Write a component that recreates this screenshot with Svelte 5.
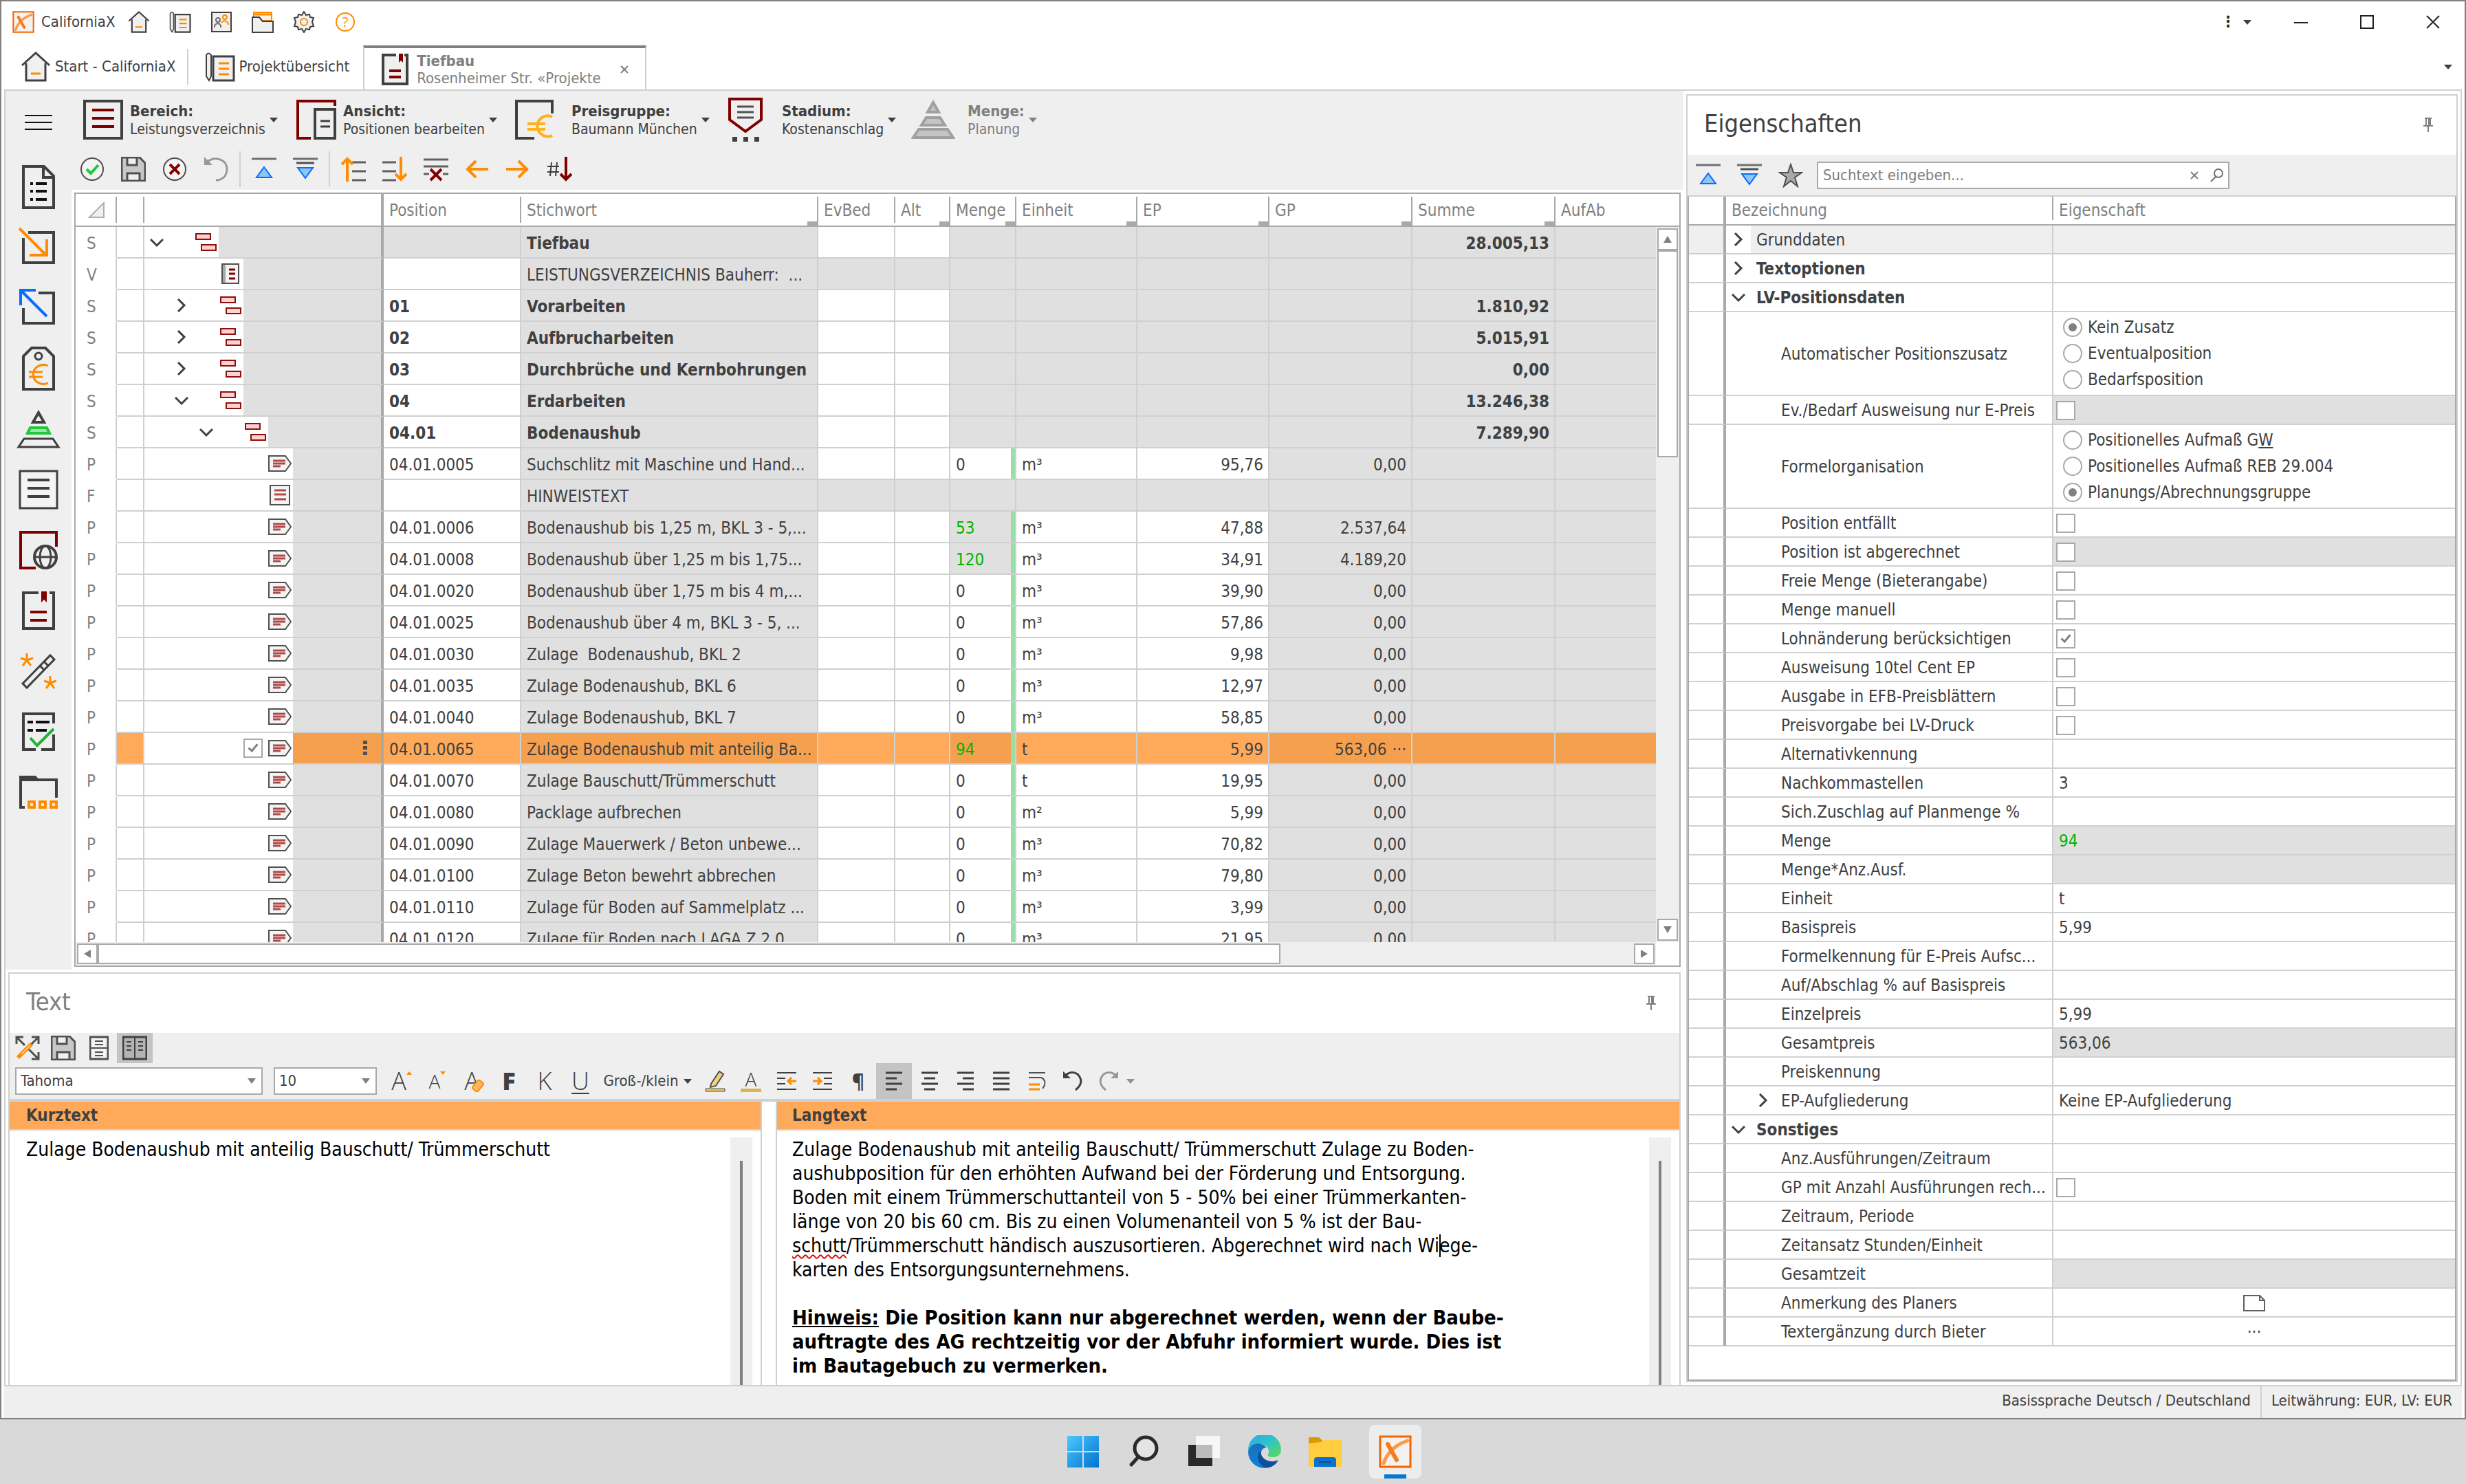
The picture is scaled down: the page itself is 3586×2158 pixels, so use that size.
<script>
  const DARK = "#404040";
  const RED = "#800000";
  const ORANGE = "#ff8c00";
  const BLUE = "#0a6cff";

  const line = (d, color = DARK, w = 3, extra = "") =>
    `<path d="${d}" fill="none" stroke="${color}" stroke-width="${w}" ${extra}/>`;
  const shape = (d, fill, color = DARK, w = 2) =>
    `<path d="${d}" fill="${fill}" stroke="${color}" stroke-width="${w}"/>`;

  const xLogo =
    shape("M2 2H46V46H2Z", "#f4f1ee", "#f26500", 3) +
    line("M42 8C24 14 12 26 7 41", "#fb9a4d", 5, 'stroke-linecap="round"') +
    line("M13 13L18 22L26 36", "#f47b20", 6, 'stroke-linecap="round"');

  const home =
    shape("M8 18V42H36V18L22 4Z", "#f0f0f0", "none", 0) +
    line("M2 20L22 2L42 20") +
    line("M8 17V42H36V17") +
    line("M15 32H29", ORANGE);

  const plan =
    shape("M12 7H42V42H12Z", "#f0f0f0", DARK, 3) +
    shape("M2 36V5Q5 0 9 5V36L6 42Z", "#f0f0f0", DARK, 2) +
    line("M20 17H35M20 25H35M20 33H35", ORANGE);

  const collapse =
    line("M0 3H36", "#707070") + shape("M18 15L29 30H7Z", "#8ec7f2", BLUE);
  const expand =
    line("M0 3H36", "#707070") +
    line("M5 9H31", "#505050") +
    shape("M18 31L29 16H7Z", "#8ec7f2", BLUE);

  const save =
    shape("M1 1H27L35 9V35H1Z", "#c8c8c8", "#505050", 3) +
    shape("M9 1H23V12H9Z", "#f0f0f0", "#505050", 3) +
    shape("M9 24H27V35H9Z", "#f0f0f0", "#505050", 3);

  // name: [width, height, body]
  const icons = {
    logo: [48, 48, xLogo],
    home: [44, 44, home],
    plan: [44, 44, plan],
    contacts: [
      32,
      32,
      shape("M2 2H30V30H2Z", "#f0f0f0") +
        '<circle cx="11" cy="13" r="3" fill="none" stroke="#707070" stroke-width="2"/>' +
        line("M6 24V21Q11 15 15 21V24", "#707070", 2) +
        '<circle cx="21" cy="9" r="3" fill="none" stroke="#ff8c00" stroke-width="2"/>' +
        line("M16 17Q21 11 26 18V20", ORANGE, 2),
    ],
    folders: [
      32,
      32,
      shape("M3 2H29V14H3Z", "#fff3e0", ORANGE) +
        line("M3 5H29", ORANGE) +
        shape("M1 9H11L16 15H31V31H1Z", "#f0f0f0"),
    ],
    gear: [
      32,
      32,
      shape(
        "M16 1L19 6L24 5L25 9L30 10L28 16L30 22L25 23L24 27L19 26L16 31L13 26L8 27L7 23L2 22L4 16L2 10L7 9L8 5L13 6Z",
        "#f0f0f0",
      ) +
        '<circle cx="16" cy="16" r="5" fill="none" stroke="#ff8c00" stroke-width="2"/>',
    ],
    help: [
      32,
      32,
      '<circle cx="16" cy="16" r="13" fill="none" stroke="#ff8c00" stroke-width="2"/>' +
        '<text x="16" y="23" font-size="20" text-anchor="middle" fill="#ff8c00" font-family="Open Sans, sans-serif">?</text>',
    ],
    book: [
      44,
      48,
      shape("M5 3H40V45H5Z", "#f0f0f0", "none", 0) +
        line("M24 3H5V45H40V3H36", DARK, 4) +
        shape("M28 1H34V14L31 11L28 14Z", RED, "none", 0) +
        line("M14 26H31M14 35H31", RED, 4),
    ],
    menu: [40, 24, line("M0 2H40M0 12H40M0 22H40", "#101010", 2)],
    range: [
      58,
      58,
      line("M2 2H56V56H2Z", DARK, 4) +
        line("M13 15H45M13 27H45M13 39H45", RED, 4),
    ],
    view: [
      58,
      58,
      line("M56 9V2H2V56H21", RED, 4) +
        line("M27 14H56V56H27Z", DARK, 4) +
        line("M35 31H49M35 39H49", DARK, 3),
    ],
    price: [
      58,
      58,
      line("M54 20V2H2V56H28", DARK, 4) +
        line("M54 25A15 15 0 1 0 54 52M18 35H44M18 43H44", "#ffb01a", 4),
    ],
    stage: [
      58,
      66,
      shape("M6 3H52V33L29 50L6 33Z", "#f0f0f0", RED, 4) +
        line("M17 14H41M17 22H41M17 30H41", "#505050", 3) +
        shape("M10 58H17V65H10ZM26 58H33V65H26ZM42 58H49V65H42Z", DARK, "none", 0),
    ],
    quantity: [
      64,
      58,
      shape("M32 4L40 18H24Z", "#c4c4c4", "#a0a0a0", 4) +
        shape("M22 26H42L49 37H15Z", "#c4c4c4", "#a0a0a0", 4) +
        shape("M11 43H53L61 55H3Z", "#c4c4c4", "#a0a0a0", 4),
    ],
    ok: [
      36,
      36,
      '<circle cx="18" cy="18" r="16" fill="#f4f4f4" stroke="#505050" stroke-width="2"/>' +
        line("M10 18L16 24L27 12", "#1fc93a", 4),
    ],
    save: [36, 36, save],
    cancel: [
      36,
      36,
      '<circle cx="18" cy="18" r="16" fill="#f4f4f4" stroke="#505050" stroke-width="2"/>' +
        line("M11 11L25 25M25 11L11 25", RED, 4),
    ],
    undoGrey: [
      36,
      36,
      line("M6 7C16 -1 34 3 34 18C34 28 27 34 18 34", "#989898", 3) +
        shape("M1 0L13 12H1Z", "#989898", "none", 0),
    ],
    collapse: [36, 36, collapse],
    expand: [36, 36, expand],
    moveUp: [
      36,
      36,
      line("M16 8H36M16 21H36M16 34H36", "#606060") +
        line("M9 36V3M1 11L9 3L17 11", ORANGE, 4),
    ],
    moveDown: [
      36,
      36,
      line("M0 8H20M0 21H20M0 34H20", "#606060") +
        line("M27 0V33M19 25L27 33L35 25", ORANGE, 4),
    ],
    removeRows: [
      36,
      36,
      line("M0 4H36M0 14H36M0 25H8M28 25H36", "#606060") +
        line("M10 18L26 34M26 18L10 34", RED, 4),
    ],
    left: [36, 36, line("M34 18H4M16 6L4 18L16 30", ORANGE, 4)],
    right: [36, 36, line("M0 18H30M18 6L30 18L18 30", ORANGE, 4)],
    sort: [
      36,
      36,
      line("M0 14H17M0 22H17M6 8L4 28M14 8L12 28", DARK, 2) +
        line("M27 0V33M19 25L27 33L35 25", RED, 4),
    ],
    docList: [
      64,
      64,
      line("M10 2H40L54 16V62H10ZM39 2V18H54", DARK, 4) +
        line("M20 27H24M28 27H44M20 38H24M28 38H44M20 50H24M28 50H44", "#101010", 4),
    ],
    importBox: [
      64,
      64,
      line("M17 10H54V54H10V18", DARK, 4) +
        line("M4 4L43 43M44 20V43H19", ORANGE, 4),
    ],
    exportBox: [
      64,
      64,
      line("M32 10H54V54H10V32", DARK, 4) +
        line("M6 6L44 44M6 28V6H28", BLUE, 4),
    ],
    tag: [
      64,
      64,
      line("M10 62V14L22 2H42L54 14V62Z", DARK, 4) +
        '<circle cx="32" cy="14" r="5" fill="none" stroke="#404040" stroke-width="3"/>' +
        line("M46 28A15 14 0 1 0 46 53M18 37H38M18 44H38", ORANGE, 3),
    ],
    pyramid: [
      64,
      64,
      line("M32 8L40 22H24Z", DARK, 4) +
        shape("M20 30H44L48 38H16Z", "#a5e0b0", "#1fc93a", 4) +
        line("M11 46H53L61 58H3Z", DARK, 3),
    ],
    textBox: [
      64,
      64,
      shape("M5 5H59V59H5Z", "#f4f4f4", DARK, 3) +
        line("M16 18H48M16 30H48M16 42H48", DARK, 4),
    ],
    globeDoc: [
      64,
      64,
      line("M58 27V6H6V58H28", RED, 4) +
        '<circle cx="42" cy="42" r="16" fill="#f0f0f0" stroke="#404040" stroke-width="4"/>' +
        '<ellipse cx="42" cy="42" rx="8" ry="16" fill="none" stroke="#404040" stroke-width="3"/>' +
        line("M26 42H58"),
    ],
    bookmark: [
      64,
      64,
      line("M32 6H10V58H54V6H48", DARK, 4) +
        shape("M36 4H44V20L40 16L36 20Z", RED, "none", 0) +
        line("M20 34H44M20 46H44", RED, 4),
    ],
    wand: [
      64,
      64,
      line("M9 50L49 9L55 15L15 56ZM34 24L40 30M40 18L46 24", DARK, 3) +
        line("M15 6V16M15 16L6 13M15 16L24 13M15 16L9 24M15 16L21 24", ORANGE, 3) +
        line("M49 39V49M49 49L40 46M49 49L58 46M49 49L43 57M49 49L55 57", ORANGE, 3),
    ],
    checklist: [
      64,
      64,
      line("M54 20V6H10V58H28M36 58H54V36", DARK, 4) +
        line("M16 18H24M28 18H48M16 30H24M28 30H44", "#101010", 4) +
        line("M20 41L30 52L54 28", "#1fb335", 4),
    ],
    folderSquares: [
      64,
      64,
      shape("M4 8H28L33 14H4Z", DARK, "none", 0) +
        line("M58 40V14H6V54H12", DARK, 4) +
        line("M18 46H26V54H18ZM34 46H42V54H34ZM50 46H58V54H50Z", ORANGE, 4),
    ],
    group: [
      32,
      28,
      shape("M2 2H23V10H2ZM10 18H31V26H10Z", "#ffd0d0", "#8c1010"),
    ],
    foreword: [
      28,
      32,
      shape("M2 2H26V30H2Z", "#f4f4f4", "#505050") +
        shape("M3 3H7V29H3Z", "#a8a8a8", "none", 0) +
        line("M12 10H21M12 16H21M12 23H21", RED),
    ],
    item: [
      34,
      26,
      shape("M1 2H25L33 13L25 24H1Z", "#f4f4f4", "#505050") +
        line("M7 9H25M7 13H25M7 17H18", "#b04a4a", 3),
    ],
    note: [
      32,
      32,
      shape("M2 2H30V30H2Z", "#f4f4f4", "#505050") +
        line("M8 9H25M8 15H25M8 22H25", "#b04a4a", 3),
    ],
    down: [20, 20, line("M1 6L10 15L19 6", DARK, 3)],
    next: [20, 20, line("M5 1L14 10L5 19", DARK, 3)],
    pin: [14, 28, line("M2 6H12M4 6V16M10 6V16M0 17H14M7 17V26M8 6V16", "#808080", 2)],
    fullscreen: [
      36,
      36,
      line("M2 12V2H12M24 2H34V12M34 24V34H24M3 3L14 14M33 3L22 14M33 33L20 20", "#505050", 3) +
        line("M4 32L24 12", ORANGE, 6) +
        line("M9 27L22 14", "#ffc680", 2),
    ],
    splitRows: [
      28,
      36,
      shape("M1 2H27V34H1Z", "#f4f4f4", "#505050", 3) +
        line("M1 18H27M8 8H20M8 13H20M8 24H20M8 29H20", "#505050", 2),
    ],
    splitCols: [
      36,
      36,
      shape("M1 2H35V34H1Z", "#b4b4b4", "#404040", 3) +
        line("M18 2V34M6 9H13M6 15H13M6 21H13M23 9H30M23 15H30M23 21H30", "#404040", 2),
    ],
    marker: [
      32,
      32,
      shape("M10 20L22 2L28 6L17 23L9 25Z", "#f3d37a", "#505050") +
        shape("M2 27H30V31H2Z", "#e8c468", "#505050", 1),
    ],
    outdent: [
      32,
      32,
      line("M2 4H30M2 12H14M2 20H14M2 28H30", "#404040", 2) +
        line("M30 16H18M23 11L18 16L23 21", ORANGE, 3),
    ],
    indent: [
      32,
      32,
      line("M2 4H30M18 12H30M18 20H30M2 28H30", "#404040", 2) +
        line("M2 16H14M9 11L14 16L9 21", ORANGE, 3),
    ],
    alignLeft: [32, 32, line("M4 4H28M4 12H20M4 20H28M4 28H20")],
    alignCenter: [32, 32, line("M4 4H28M8 12H24M4 20H28M8 28H24")],
    alignRight: [32, 32, line("M4 4H28M12 12H28M4 20H28M12 28H28")],
    alignFull: [32, 32, line("M4 4H28M4 12H28M4 20H28M4 28H28")],
    wrap: [
      32,
      32,
      line("M4 4H28M4 11H22Q29 14 27 22L24 27", "#505050", 2) +
        line("M4 21H20M4 28H20", ORANGE, 3),
    ],
    undo: [
      32,
      32,
      line("M5 8Q14 0 23 6Q34 18 20 29", DARK, 3) +
        shape("M2 2L13 12H2Z", DARK, "none", 0),
    ],
    redo: [
      32,
      32,
      line("M27 8Q18 0 9 6Q-2 18 12 29", "#989898", 3) +
        shape("M30 2L19 12H30Z", "#989898", "none", 0),
    ],
    star: [
      36,
      36,
      shape("M18 2L22 14H34L24 21L28 34L18 26L8 34L12 21L2 14H14Z", "#a8a8a8", "#505050"),
    ],
    clear: [16, 16, line("M3 3L13 13M13 3L3 13", "#808080", 2)],
    search: [
      22,
      22,
      '<circle cx="13" cy="8" r="6" fill="none" stroke="#707070" stroke-width="2"/>' +
        line("M9 13L2 20", "#707070", 2),
    ],
    emptyNote: [32, 26, line("M1 2H24L31 9V24H1ZM24 2V9H31", "#606060", 2)],
    minimize: [24, 24, line("M2 13H22", "#202020", 2)],
    maximize: [24, 24, line("M3 3H21V21H3Z", "#202020", 2)],
    close: [24, 24, line("M3 3L21 21M21 3L3 21", "#202020", 2)],
    windows: [
      48,
      48,
      '<defs><linearGradient id="win" x1="0" y1="0" x2="1" y2="1"><stop offset="0" stop-color="#4cc8ff"/><stop offset="1" stop-color="#0073d1"/></linearGradient></defs>' +
        '<path d="M1 1H23V23H1ZM25 1H47V23H25ZM1 25H23V47H1ZM25 25H47V47H25Z" fill="url(#win)"/>',
    ],
    taskSearch: [
      48,
      48,
      '<circle cx="27" cy="19" r="16" fill="#e4e4e4" stroke="#2b2b2b" stroke-width="5"/>' +
        line("M16 32L6 43", "#2b2b2b", 5, 'stroke-linecap="round"'),
    ],
    taskView: [
      48,
      48,
      shape("M1 14H36V45H1Z", "#2a2a2a", "none", 0) +
        shape("M12 1H47V33H12Z", "#f7f7f7", "none", 0) +
        shape("M12 14H36V33H12Z", "#bcbcbc", "none", 0),
    ],
    edge: [
      48,
      48,
      '<defs><linearGradient id="edgeTop" x1="0" y1="0" x2="1" y2="1"><stop offset="0" stop-color="#2aa8e8"/><stop offset=".5" stop-color="#30c3c9"/><stop offset="1" stop-color="#5fdc4e"/></linearGradient>' +
        '<linearGradient id="edgeSide" x1="0" y1="0" x2="0" y2="1"><stop offset="0" stop-color="#1b6fb8"/><stop offset="1" stop-color="#0a84e0"/></linearGradient></defs>' +
        '<path d="M0 22A24 24 0 0 1 48 21C48 31 38 34 30 31C27 29 31 26 30 22C28 10 8 10 0 22Z" fill="url(#edgeTop)"/>' +
        '<path d="M0 24C3 10 20 9 27 18C21 18 17 24 19 31C21 40 32 45 42 40C37 45 31 48 24 48A24 24 0 0 1 0 24Z" fill="url(#edgeSide)"/>' +
        '<path d="M15 26C12 36 18 47 28 47C35 46 41 42 44 36C36 40 27 38 22 33C19 30 18 26 19 22Z" fill="#10509a"/>',
    ],
    explorer: [
      48,
      48,
      shape("M0 4Q0 3 2 3H15L20 8V14H0Z", "#dd9a00", "none", 0) +
        shape("M0 12L18 10L21 7H48V46H0Z", "#ffcd3f", "none", 0) +
        shape("M8 46V36Q8 32 12 32H36Q40 32 40 36V46Z", "#0a72cc", "none", 0) +
        line("M15 39H33", "#0b4f92", 2),
    ],
  };

  const quickBar = ["home", "plan", "contacts", "folders", "gear", "help"];

  const ribbon = [
    { icon: "range", title: "Bereich:", text: "Leistungsverzeichnis" },
    { icon: "view", title: "Ansicht:", text: "Positionen bearbeiten" },
    { icon: "price", title: "Preisgruppe:", text: "Baumann München", wide: true },
    { icon: "stage", title: "Stadium:", text: "Kostenanschlag", wide: true },
    { icon: "quantity", title: "Menge:", text: "Planung", wide: true, off: true },
  ];

  const tools = [
    ["ok", "save", "cancel", "undoGrey"],
    ["collapse", "expand"],
    ["moveUp", "moveDown", "removeRows", "left", "right", "sort"],
  ];

  const sideIcons = [
    "docList",
    "importBox",
    "exportBox",
    "tag",
    "pyramid",
    "textBox",
    "globeDoc",
    "bookmark",
    "wand",
    "checklist",
    "folderSquares",
  ];

  const columns = [
    { label: "Position" },
    { label: "Stichwort", filter: true },
    { label: "EvBed" },
    { label: "Alt", filter: true },
    { label: "Menge", filter: true },
    { label: "Einheit", filter: true },
    { label: "EP", filter: true },
    { label: "GP", filter: true },
    { label: "Summe", filter: true },
    { label: "AufAb", last: true },
  ];

  const group = (level, open, pos, text, sum) => ({ type: "S", level, open, pos, text, sum });
  const item = (pos, text, ep, unit = "m³", qty = "0", gp = "0,00") => ({
    type: "P",
    level: 3,
    pos: "04.01." + pos,
    text,
    ep,
    unit,
    qty,
    gp,
  });

  const rows = [
    group(0, true, "", "Tiefbau", "28.005,13"),
    { type: "V", level: 1, pos: "", text: "LEISTUNGSVERZEICHNIS Bauherr:  ..." },
    group(1, false, "01", "Vorarbeiten", "1.810,92"),
    group(1, false, "02", "Aufbrucharbeiten", "5.015,91"),
    group(1, false, "03", "Durchbrüche und Kernbohrungen", "0,00"),
    group(1, true, "04", "Erdarbeiten", "13.246,38"),
    group(2, true, "04.01", "Bodenaushub", "7.289,90"),
    item("0005", "Suchschlitz mit Maschine und Hand...", "95,76"),
    { type: "F", level: 3, pos: "", text: "HINWEISTEXT" },
    item("0006", "Bodenaushub bis 1,25 m, BKL 3 - 5,...", "47,88", "m³", "53", "2.537,64"),
    item("0008", "Bodenaushub über 1,25 m bis 1,75...", "34,91", "m³", "120", "4.189,20"),
    item("0020", "Bodenaushub über 1,75 m bis 4 m,...", "39,90"),
    item("0025", "Bodenaushub über 4 m, BKL 3 - 5, ...", "57,86"),
    item("0030", "Zulage  Bodenaushub, BKL 2", "9,98"),
    item("0035", "Zulage Bodenaushub, BKL 6", "12,97"),
    item("0040", "Zulage Bodenaushub, BKL 7", "58,85"),
    {
      ...item("0065", "Zulage Bodenaushub mit anteilig Ba...", "5,99", "t", "94", "563,06"),
      selected: true,
    },
    item("0070", "Zulage Bauschutt/Trümmerschutt", "19,95", "t"),
    item("0080", "Packlage aufbrechen", "5,99", "m²"),
    item("0090", "Zulage Mauerwerk / Beton unbewe...", "70,82"),
    item("0100", "Zulage Beton bewehrt abbrechen", "79,80"),
    item("0110", "Zulage für Boden auf Sammelplatz ...", "3,99"),
    item("0120", "Zulage für Boden nach LAGA Z 2.0", "21,95"),
  ];

  const rowIcon = { S: "group", V: "foreword", P: "item", F: "note" };

  const props = [
    { label: "Grunddaten", level: 0, mark: "next", tint: true },
    { label: "Textoptionen", level: 0, mark: "next", bold: true },
    { label: "LV-Positionsdaten", level: 0, mark: "down", bold: true },
    {
      label: "Automatischer Positionszusatz",
      radios: ["Kein Zusatz", "Eventualposition", "Bedarfsposition"],
      picked: 0,
    },
    { label: "Ev./Bedarf Ausweisung nur E-Preis", check: true, grey: true },
    {
      label: "Formelorganisation",
      radios: ["Positionelles Aufmaß GW", "Positionelles Aufmaß REB 29.004", "Planungs/Abrechnungsgruppe"],
      picked: 2,
    },
    { label: "Position entfällt", check: true },
    { label: "Position ist abgerechnet", check: true, grey: true },
    { label: "Freie Menge (Bieterangabe)", check: true },
    { label: "Menge manuell", check: true },
    { label: "Lohnänderung berücksichtigen", check: true, on: true },
    { label: "Ausweisung 10tel Cent EP", check: true },
    { label: "Ausgabe in EFB-Preisblättern", check: true },
    { label: "Preisvorgabe bei LV-Druck", check: true },
    { label: "Alternativkennung" },
    { label: "Nachkommastellen", value: "3" },
    { label: "Sich.Zuschlag auf Planmenge %" },
    { label: "Menge", value: "94", grey: true, green: true },
    { label: "Menge*Anz.Ausf.", grey: true },
    { label: "Einheit", value: "t" },
    { label: "Basispreis", value: "5,99" },
    { label: "Formelkennung für E-Preis Aufsc..." },
    { label: "Auf/Abschlag % auf Basispreis" },
    { label: "Einzelpreis", value: "5,99" },
    { label: "Gesamtpreis", value: "563,06", grey: true },
    { label: "Preiskennung" },
    { label: "EP-Aufgliederung", mark: "next", value: "Keine EP-Aufgliederung" },
    { label: "Sonstiges", level: 0, mark: "down", bold: true },
    { label: "Anz.Ausführungen/Zeitraum" },
    { label: "GP mit Anzahl Ausführungen rech...", check: true },
    { label: "Zeitraum, Periode" },
    { label: "Zeitansatz Stunden/Einheit" },
    { label: "Gesamtzeit", grey: true },
    { label: "Anmerkung des Planers", note: true },
    { label: "Textergänzung durch Bieter", dots: true },
  ];

  const taskbar = ["windows", "taskSearch", "taskView", "edge", "explorer"];
</script>

{#snippet icon(name, cls = "")}
  <svg
    class={cls}
    width={icons[name][0]}
    height={icons[name][1]}
    viewBox="0 0 {icons[name][0]} {icons[name][1]}"
    aria-hidden="true">{@html icons[name][2]}</svg
  >
{/snippet}

<div class="app">
  <div class="window">
    <header class="titlebar">
      {@render icon("logo", "small")}
      <span class="app-name">CaliforniaX</span>
      <nav class="quick">
        {#each quickBar as name}
          <button aria-label={name}>{@render icon(name, "small")}</button>
        {/each}
      </nav>
      <div class="window-buttons">
        <button class="more" aria-label="Mehr">⋮<i class="caret"></i></button>
        <button aria-label="Minimieren">{@render icon("minimize")}</button>
        <button aria-label="Maximieren">{@render icon("maximize")}</button>
        <button aria-label="Schließen">{@render icon("close")}</button>
      </div>
    </header>

    <nav class="tabs">
      <button class="tab first">{@render icon("home")}Start - CaliforniaX</button>
      <button class="tab second">{@render icon("plan")}Projektübersicht</button>
      <div class="tab active">
        {@render icon("book")}
        <div class="tab-text">
          <b>Tiefbau</b>
          <span>Rosenheimer Str. «Projekte</span>
        </div>
        <button aria-label="Tab schließen">{@render icon("clear")}</button>
      </div>
      <i class="caret tab-list"></i>
    </nav>

    <main class="workspace">
      <section class="left">
        <div class="upper">
          <aside class="sidebar">
            <button class="burger" aria-label="Menü">{@render icon("menu")}</button>
            {#each sideIcons as name}
              <button aria-label={name}>{@render icon(name)}</button>
            {/each}
          </aside>

          <div class="center">
            <div class="ribbon">
              {#each ribbon as entry}
                <button class="entry" class:wide={entry.wide} class:off={entry.off}>
                  <span class="entry-icon">{@render icon(entry.icon)}</span>
                  <span class="entry-text">
                    <b>{entry.title}</b>
                    <span>{entry.text}</span>
                  </span>
                  <i class="caret"></i>
                </button>
              {/each}
            </div>
            <div class="tools">
              {#each tools as set}
                <div class="tool-set">
                  {#each set as name}
                    <button aria-label={name}>{@render icon(name)}</button>
                  {/each}
                </div>
              {/each}
            </div>

            <div class="grid-frame">
              <div class="grid-view">
                <div class="grid-scroll">
                  <table class="grid">
                    <colgroup>
                      <col class="c-type" /><col class="c-mark" /><col class="c-tree" />
                      <col class="c-pos" /><col class="c-text" /><col class="c-ev" />
                      <col class="c-alt" /><col class="c-qty" /><col class="c-unit" />
                      <col class="c-ep" /><col class="c-gp" /><col class="c-gp" /><col />
                    </colgroup>
                    <thead>
                      <tr>
                        <th class="corner">
                          <svg width="26" height="26" viewBox="0 0 26 26" aria-hidden="true">
                            <path d="M2 23H23V2Z" fill="#f0f0f0" stroke="#b0b0b0" stroke-width="2" />
                          </svg>
                        </th>
                        <th></th>
                        <th class="tree"></th>
                        {#each columns as col}
                          <th class:filter={col.filter} class:last={col.last}>{col.label}</th>
                        {/each}
                      </tr>
                    </thead>
                    <tbody>
                      {#each rows as row}
                        {@const info = row.type == "V" || row.type == "F"}
                        {@const open = row.type == "P"}
                        <tr class:bold={row.type == "S"} class:selected={row.selected}>
                          <td class="type">{row.type}</td>
                          <td class="mark"></td>
                          <td class="tree">
                            <div class="tree-cell">
                              <span class="tree-lead level-{row.level}">
                                <span class="slot">
                                  {#if row.type == "S"}{@render icon(row.open ? "down" : "next")}{/if}
                                </span>
                                <span class="slot check">
                                  {#if row.selected}
                                    <input type="checkbox" checked aria-label="Position {row.pos}" />
                                  {/if}
                                </span>
                                <span class="slot">{@render icon(rowIcon[row.type])}</span>
                              </span>
                              <span class="tree-rest grey">{#if row.selected}<i class="dots"></i>{/if}</span>
                            </div>
                          </td>
                          <td class:grey={row.level == 0}>{row.pos}</td>
                          <td class="grey">{row.text}</td>
                          <td class:grey={info}></td>
                          <td class:grey={info}></td>
                          <td
                            class:grey={!open || row.qty != "0"}
                            class:green={open && row.qty != "0"}
                            class:bar={open}>{row.qty ?? ""}</td
                          >
                          <td class:grey={!open}>{row.unit ?? ""}</td>
                          <td class="num" class:grey={!open}>{row.ep ?? ""}</td>
                          <td class="num grey"
                            >{row.gp ?? ""}{#if row.selected}<span class="more-dots">···</span>{/if}</td
                          >
                          <td class="num grey">{row.sum ?? ""}</td>
                          <td class="grey last"></td>
                        </tr>
                      {/each}
                    </tbody>
                  </table>
                  <div class="vbar">
                    <button aria-label="Nach oben"><i class="arrow up"></i></button>
                    <div class="track"><div class="thumb"></div></div>
                    <button aria-label="Nach unten"><i class="arrow"></i></button>
                  </div>
                </div>
                <div class="hbar">
                  <button aria-label="Nach links"><i class="arrow west"></i></button>
                  <div class="track"><div class="thumb"></div></div>
                  <button aria-label="Nach rechts"><i class="arrow east"></i></button>
                </div>
              </div>
            </div>
          </div>
        </div>

        <section class="text-panel">
          <div class="panel-title muted">
            <h2>Text</h2>
            {@render icon("pin")}
          </div>
          <div class="editor-tools">
            <div class="tool-row">
              <button aria-label="Vollbild">{@render icon("fullscreen")}</button>
              <button aria-label="Speichern">{@render icon("save")}</button>
              <button aria-label="Untereinander">{@render icon("splitRows")}</button>
              <button class="pressed" aria-label="Nebeneinander">{@render icon("splitCols")}</button>
            </div>
            <div class="format-row">
              <select class="font" aria-label="Schriftart"><option>Tahoma</option></select>
              <select class="size" aria-label="Schriftgröße"><option>10</option></select>
              <button class="letter" aria-label="Größer">A<i class="tip"></i></button>
              <button class="letter less" aria-label="Kleiner">A<i class="tip"></i></button>
              <button class="letter erase" aria-label="Format löschen">A<i class="tip"></i></button>
              <button class="letter strong">F</button>
              <button class="letter">K</button>
              <button class="letter under">U</button>
              <button class="case">Groß-/klein<i class="caret"></i></button>
              <button aria-label="Markieren">{@render icon("marker")}</button>
              <button class="letter color" aria-label="Schriftfarbe"><span>A</span></button>
              <button aria-label="Einzug verkleinern">{@render icon("outdent")}</button>
              <button aria-label="Einzug vergrößern">{@render icon("indent")}</button>
              <button class="letter pilcrow">¶</button>
              <button class="pressed" aria-label="Links">{@render icon("alignLeft")}</button>
              <button aria-label="Zentriert">{@render icon("alignCenter")}</button>
              <button aria-label="Rechts">{@render icon("alignRight")}</button>
              <button aria-label="Blocksatz">{@render icon("alignFull")}</button>
              <button aria-label="Umbruch">{@render icon("wrap")}</button>
              <button aria-label="Rückgängig">{@render icon("undo")}</button>
              <button aria-label="Wiederholen">{@render icon("redo")}</button>
              <i class="caret faint"></i>
            </div>
          </div>
          <div class="panes">
            <div class="pane">
              <h3>Kurztext</h3>
              <div class="pane-body">
                <p>Zulage Bodenaushub mit anteilig Bauschutt/ Trümmerschutt</p>
                <div class="strip"></div>
              </div>
            </div>
            <div class="pane">
              <h3>Langtext</h3>
              <div class="pane-body">
                <p>
                  Zulage Bodenaushub mit anteilig Bauschutt/ Trümmerschutt Zulage zu Boden-<br />
                  aushubposition für den erhöhten Aufwand bei der Förderung und Entsorgung.<br />
                  Boden mit einem Trümmerschuttanteil von 5 - 50% bei einer Trümmerkanten-<br />
                  länge von 20 bis 60 cm. Bis zu einen Volumenanteil von 5 % ist der Bau-<br />
                  <span class="typo">schutt</span>/Trümmerschutt händisch auszusortieren. Abgerechnet wird nach
                  Wi<i class="cursor"></i>ege-<br />
                  karten des Entsorgungsunternehmens.<br />
                  <br />
                  <b
                    ><u>Hinweis:</u> Die Position kann nur abgerechnet werden, wenn der Baube-<br />
                    auftragte des AG rechtzeitig vor der Abfuhr informiert wurde. Dies ist<br />
                    im Bautagebuch zu vermerken.</b
                  >
                </p>
                <div class="strip"></div>
              </div>
            </div>
          </div>
        </section>
      </section>

      <section class="props-panel">
        <div class="panel-title">
          <h2>Eigenschaften</h2>
          {@render icon("pin")}
        </div>
        <div class="props-tools">
          <button aria-label="Alle zuklappen">{@render icon("collapse")}</button>
          <button aria-label="Alle aufklappen">{@render icon("expand")}</button>
          <button aria-label="Favoriten">{@render icon("star")}</button>
          <div class="search">
            <input type="text" placeholder="Suchtext eingeben..." aria-label="Suchtext" />
            <button aria-label="Leeren">{@render icon("clear")}</button>
            <button aria-label="Suchen">{@render icon("search")}</button>
          </div>
        </div>
        <div class="props-body">
          <table class="props">
            <colgroup><col class="p-mark" /><col class="p-name" /><col /></colgroup>
            <thead>
              <tr><th></th><th>Bezeichnung</th><th>Eigenschaft</th></tr>
            </thead>
            <tbody>
              {#each props as prop, i}
                <tr class:tint={prop.tint} class:tall={prop.radios}>
                  <td></td>
                  <td class:bold={prop.bold}>
                    <div class="name" class:root={prop.level == 0}>
                      <span class="slot">{#if prop.mark}{@render icon(prop.mark)}{/if}</span>
                      {#if prop.check}
                        <label for="prop-{i}">{prop.label}</label>
                      {:else}
                        <span>{prop.label}</span>
                      {/if}
                    </div>
                  </td>
                  <td class:grey={prop.grey} class:green={prop.green} class:middle={prop.note || prop.dots}>
                    {#if prop.radios}
                      {#each prop.radios as option, n}
                        <label class="radio">
                          <input type="radio" name="group-{i}" checked={n == prop.picked} />
                          {#if option.endsWith("GW")}
                            <span>{option.slice(0, -1)}<u>W</u></span>
                          {:else}
                            <span>{option}</span>
                          {/if}
                        </label>
                      {/each}
                    {:else if prop.check}
                      <input type="checkbox" id="prop-{i}" checked={prop.on} />
                    {:else if prop.note}
                      {@render icon("emptyNote")}
                    {:else if prop.dots}
                      ···
                    {:else}
                      {prop.value ?? ""}
                    {/if}
                  </td>
                </tr>
              {/each}
            </tbody>
          </table>
        </div>
      </section>
    </main>

    <footer class="status">
      <span>Basissprache Deutsch / Deutschland</span>
      <span>Leitwährung: EUR, LV: EUR</span>
    </footer>
  </div>

  <nav class="taskbar">
    {#each taskbar as name}
      <button aria-label={name}>{@render icon(name)}</button>
    {/each}
    <button class="running" aria-label="CaliforniaX">{@render icon("logo")}</button>
  </nav>
</div>

<style>
  :global(body) {
    margin: 0;
  }

  .app {
    --line: #d0d0d0;
    --edge: #a9a9a9;
    --bar: #efefef;
    --grey: #e0e0e0;
    --orange: #ffaa5a;
    display: flex;
    flex-direction: column;
    height: 100vh;
    overflow: hidden;
    color: #404040;
    font-family: "DejaVu Sans Condensed", "Noto Sans", sans-serif;
    font-size: 24px;
    line-height: 28px;
    white-space: nowrap;
  }

  .app *,
  .app *::before,
  .app *::after {
    box-sizing: border-box;
  }

  button {
    display: flex;
    align-items: center;
    justify-content: center;
    padding: 0;
    border: 0;
    background: none;
    color: inherit;
    font: inherit;
  }

  svg {
    display: block;
    flex: none;
  }

  h2,
  h3,
  p {
    margin: 0;
    font-weight: normal;
  }

  .small {
    width: 32px;
    height: 32px;
  }

  .caret {
    border: 6px solid transparent;
    border-top: 7px solid #404040;
    border-bottom: 0;
  }

  .caret.faint {
    border-top-color: #909090;
  }

  .window {
    display: flex;
    flex: 1;
    flex-direction: column;
    min-height: 0;
    padding: 0 4px;
    border: 2px solid #808080;
    background: #fff;
  }

  .titlebar {
    display: flex;
    align-items: center;
    height: 60px;
    padding-left: 12px;
    font-size: 22px;
  }

  .app-name {
    width: 136px;
    padding-left: 10px;
  }

  .quick {
    display: flex;
    gap: 28px;
  }

  .window-buttons {
    display: flex;
    margin-left: auto;
    padding-right: 30px;
    gap: 72px;
  }

  .more {
    gap: 12px;
    margin-right: -12px;
    color: #202020;
    font-weight: bold;
  }

  .tabs {
    display: flex;
    align-items: center;
    height: 68px;
    padding-top: 2px;
    font-size: 22px;
  }

  .tab {
    gap: 6px;
    height: 52px;
    padding: 0 24px;
  }

  .tab.first {
    padding-right: 16px;
  }

  .tab.second {
    padding-right: 20px;
    border-left: 2px solid var(--line);
  }

  .tab.active {
    display: flex;
    align-items: center;
    align-self: flex-end;
    gap: 10px;
    height: 66px;
    margin-bottom: -2px;
    padding: 0 22px;
    border: 2px solid var(--line);
    border-top: 4px solid #808080;
    border-bottom: 0;
    background: #fff;
    color: #808080;
    line-height: 25px;
  }

  .tab-text {
    display: flex;
    flex-direction: column;
    width: 284px;
  }

  .tab-list {
    margin-right: 14px;
    margin-left: auto;
  }

  .workspace {
    display: grid;
    flex: 1;
    grid-template-columns: 2440fr 1122fr;
    gap: 4px;
    min-height: 0;
    padding-right: 4px;
    border: 2px solid var(--line);
  }

  .left {
    display: flex;
    flex-direction: column;
    min-width: 0;
    min-height: 0;
  }

  .upper {
    display: flex;
    flex: 1;
    min-height: 0;
  }

  .sidebar {
    display: flex;
    flex: none;
    flex-direction: column;
    align-items: center;
    gap: 24px;
    width: 96px;
    background: var(--bar);
  }

  .burger {
    height: 92px;
    margin-bottom: -8px;
  }

  .center {
    display: flex;
    flex: 1;
    flex-direction: column;
    min-width: 0;
    background: var(--bar);
  }

  .ribbon {
    display: grid;
    flex: none;
    grid-template-columns: 310px 318px 306px 270px auto;
    height: 84px;
    padding-left: 17px;
    font-size: 21px;
  }

  .entry {
    justify-content: flex-start;
    gap: 6px;
    text-align: left;
    line-height: 26px;
  }

  .entry-icon {
    display: flex;
    align-items: center;
    width: 62px;
  }

  .entry.wide .entry-icon {
    width: 76px;
  }

  .entry-text {
    display: flex;
    flex-direction: column;
    padding-top: 2px;
  }

  .entry-text b {
    font-size: 22px;
  }

  .entry.off {
    color: #808080;
  }

  .entry.off .caret {
    border-top-color: #808080;
  }

  .tools {
    display: flex;
    flex: none;
    height: 60px;
    padding-left: 4px;
  }

  .tool-set {
    display: flex;
    align-items: center;
    align-self: flex-start;
    gap: 24px;
    height: 52px;
    margin-top: 4px;
    padding: 0 16px 0 8px;
    border-right: 2px solid var(--line);
  }

  .tool-set + .tool-set {
    padding-left: 16px;
  }

  .tool-set:last-child {
    border-right: 0;
  }

  .grid-frame {
    display: flex;
    flex: 1;
    min-height: 0;
    padding: 4px;
    background: #fff;
  }

  .grid-view {
    display: flex;
    flex: 1;
    flex-direction: column;
    min-width: 0;
    border: 2px solid var(--edge);
  }

  .grid-scroll {
    position: relative;
    flex: 1;
    min-height: 0;
    overflow: hidden;
  }

  table {
    width: 100%;
    border-spacing: 0;
    table-layout: fixed;
  }

  th {
    color: #808080;
    font-weight: normal;
    text-align: left;
  }

  .grid tr {
    height: 46px;
  }

  .grid th,
  .grid td {
    height: 46px;
    padding: 3px 7px 0 8px;
    border-right: 2px solid var(--line);
    border-bottom: 2px solid var(--line);
    overflow: hidden;
    white-space: pre;
  }

  .grid th {
    height: 48px;
    padding-top: 2px;
    border-right: 0;
    border-bottom-color: var(--edge);
    background: linear-gradient(var(--edge), var(--edge)) right center / 2px 38px no-repeat;
  }

  .grid th.filter {
    background:
      linear-gradient(var(--edge), var(--edge)) right center / 2px 38px no-repeat,
      linear-gradient(var(--edge), var(--edge)) right bottom / 16px 6px no-repeat;
  }

  .grid th.last {
    background: none;
  }

  .grid .tree {
    padding: 0;
    border-right: 4px solid var(--edge);
  }

  .grid th.tree {
    background: none;
  }

  .corner svg {
    margin-left: 10px;
  }

  .grid .type {
    padding-left: 16px;
    border-bottom-color: transparent;
    color: #808080;
    font-weight: normal;
  }

  .c-type {
    width: 60px;
  }
  .c-mark {
    width: 40px;
  }
  .c-tree {
    width: 348px;
  }
  .c-pos {
    width: 200px;
  }
  .c-text {
    width: 432px;
  }
  .c-ev {
    width: 112px;
  }
  .c-alt {
    width: 80px;
  }
  .c-qty {
    width: 96px;
  }
  .c-unit {
    width: 176px;
  }
  .c-ep {
    width: 192px;
  }
  .c-gp {
    width: 208px;
  }

  .bold {
    font-weight: bold;
  }

  .grey {
    background: var(--grey);
  }

  .green {
    color: #00b400;
  }

  .grid .num {
    text-align: right;
  }

  .grid .bar {
    background-image: linear-gradient(#9bdfa8, #9bdfa8);
    background-position: right center;
    background-repeat: no-repeat;
    background-size: 6px 100%;
  }

  .grid .last {
    border-right: 0;
  }

  .selected .mark,
  .selected td:nth-child(n + 4) {
    background-color: var(--orange);
  }

  .selected .tree-rest,
  .selected td.grey:nth-child(n + 4) {
    background-color: #f5a04f;
  }

  .tree-cell {
    display: flex;
    height: 44px;
  }

  .tree-lead {
    display: flex;
  }

  .level-1 {
    padding-left: 36px;
  }
  .level-2 {
    padding-left: 72px;
  }
  .level-3 {
    padding-left: 108px;
  }

  .slot {
    display: flex;
    flex: none;
    align-items: center;
    justify-content: center;
    width: 36px;
  }

  .tree-lead .slot:last-child {
    padding-right: 2px;
  }

  .slot.check {
    justify-content: flex-start;
  }

  .tree-rest {
    display: flex;
    flex: 1;
    align-items: center;
    justify-content: flex-end;
    padding-right: 20px;
  }

  .dots {
    width: 6px;
    height: 22px;
    background: repeating-linear-gradient(#505050 0 5px, transparent 5px 8px);
  }

  .more-dots {
    padding-left: 8px;
  }

  input[type="checkbox"],
  input[type="radio"] {
    flex: none;
    display: grid;
    place-items: center;
    width: 28px;
    height: 28px;
    margin: 0;
    border: 2px solid var(--edge);
    background: #fff;
    appearance: none;
  }

  input[type="radio"] {
    border-radius: 50%;
  }

  input[type="checkbox"]:checked::before {
    width: 8px;
    height: 14px;
    margin-top: -4px;
    border: solid #808080;
    border-width: 0 3px 3px 0;
    content: "";
    transform: rotate(40deg);
  }

  input[type="radio"]:checked::before {
    width: 12px;
    height: 12px;
    border-radius: 50%;
    background: #808080;
    content: "";
  }

  .vbar {
    position: absolute;
    top: 48px;
    right: 0;
    bottom: 0;
    display: flex;
    flex-direction: column;
    width: 34px;
    padding: 2px;
    background: var(--bar);
  }

  .vbar button,
  .hbar button {
    flex: none;
    width: 30px;
    height: 32px;
    border: 2px solid var(--edge);
    background: #fff;
  }

  .track {
    flex: 1;
  }

  .thumb {
    border: 2px solid var(--edge);
    background: #fff;
  }

  .vbar .thumb {
    height: 31%;
  }

  .hbar {
    display: flex;
    flex: none;
    height: 34px;
    margin-right: 34px;
    padding: 2px;
    background: var(--bar);
  }

  .hbar .thumb {
    width: 77%;
    height: 30px;
  }

  .hbar button {
    height: 30px;
  }

  .arrow {
    border: 6px solid transparent;
    border-top: 10px solid #808080;
    border-bottom: 0;
  }
  .arrow.up {
    transform: rotate(180deg);
  }
  .arrow.west {
    transform: rotate(90deg);
  }
  .arrow.east {
    transform: rotate(-90deg);
  }

  .text-panel {
    flex: none;
    margin: 4px 4px 0;
    border: 2px solid var(--line);
    border-bottom: 0;
  }

  .panel-title {
    display: flex;
    align-items: center;
    justify-content: space-between;
    height: 86px;
    padding: 0 34px 4px 24px;
  }

  .panel-title h2 {
    font-size: 36px;
    line-height: 44px;
  }

  .muted {
    color: #808080;
  }

  .editor-tools {
    height: 100px;
    border-bottom: 4px solid var(--line);
    background: var(--bar);
  }

  .tool-row {
    display: flex;
    height: 44px;
  }

  .tool-row button,
  .format-row button {
    width: 52px;
    height: 44px;
  }

  .pressed {
    background: #c4c4c4;
  }

  .format-row {
    display: flex;
    align-items: center;
    height: 52px;
    padding-left: 8px;
    font-size: 22px;
  }

  .format-row .pressed {
    height: 52px;
  }

  select {
    height: 40px;
    margin-right: 16px;
    padding: 0 6px;
    border: 2px solid var(--edge);
    border-radius: 0;
    background: #fff
      url("data:image/svg+xml,%3Csvg xmlns='http://www.w3.org/2000/svg' width='12' height='8'%3E%3Cpath d='M0 0H12L6 8Z' fill='%23808080'/%3E%3C/svg%3E")
      right 8px center no-repeat;
    color: inherit;
    font: inherit;
    appearance: none;
  }

  .font {
    width: 360px;
  }

  .size {
    width: 150px;
    margin-right: 10px;
  }

  .format-row .letter {
    font-family: "Open Sans", sans-serif;
    font-size: 36px;
    font-weight: 300;
  }

  .letter .tip {
    align-self: flex-start;
    margin-top: 8px;
    border: 4px solid transparent;
    border-top: 0;
    border-bottom: 5px solid #ff8c00;
  }

  .format-row .letter.less {
    font-size: 28px;
  }

  .letter.less .tip {
    border-top: 5px solid #ff8c00;
    border-bottom: 0;
  }

  .letter.erase .tip {
    align-self: flex-end;
    width: 12px;
    height: 18px;
    margin-bottom: 6px;
    margin-left: -8px;
    border: 2px solid #ff8c00;
    border-radius: 4px;
    background: #ffb765;
    transform: rotate(40deg);
  }

  .format-row .letter.strong {
    font-weight: 800;
  }

  .letter.under {
    text-decoration: underline 2px;
    text-underline-offset: 4px;
  }

  .format-row .letter.color {
    font-size: 28px;
  }

  .letter.color span {
    width: 30px;
    height: 32px;
    border-bottom: 5px solid #d8b45c;
    line-height: 26px;
  }

  .format-row .letter.pilcrow {
    font-size: 28px;
    font-weight: 700;
  }

  .format-row .case {
    gap: 8px;
    width: 144px;
  }

  .panes {
    display: grid;
    grid-template-columns: 1094fr 1314fr;
    gap: 20px;
  }

  .pane {
    min-width: 0;
    border-right: 2px solid var(--line);
  }

  .pane + .pane {
    border-right: 0;
    border-left: 2px solid var(--line);
  }

  h3 {
    height: 42px;
    padding-left: 24px;
    border-bottom: 2px solid var(--line);
    background: var(--orange);
    font-size: 24px;
    font-weight: bold;
    line-height: 40px;
  }

  .pane + .pane h3,
  .pane + .pane .pane-body {
    padding-left: 22px;
  }

  .pane-body {
    display: flex;
    height: 370px;
    padding: 10px 12px 0 24px;
    color: #000;
    font-size: 28px;
    line-height: 35px;
  }

  .pane-body p {
    flex: 1;
    overflow: hidden;
  }

  .pane-body b {
    font-size: 29px;
  }

  .strip {
    width: 32px;
    background: linear-gradient(#808080, #808080) center 34px / 4px 100% no-repeat var(--bar);
  }

  .typo {
    text-decoration: underline wavy #e00000 2px;
    text-underline-offset: 3px;
  }

  .cursor {
    margin-right: -2px;
    border-left: 2px solid #000;
  }

  .props-panel {
    display: flex;
    flex-direction: column;
    min-width: 0;
    margin: 5px 0 4px;
    border: 2px solid var(--line);
  }

  .props-tools {
    display: flex;
    flex: none;
    align-items: center;
    gap: 24px;
    height: 61px;
    padding-left: 12px;
    border-bottom: 2px solid var(--line);
    background: var(--bar);
  }

  .search {
    display: flex;
    align-items: center;
    gap: 14px;
    width: 600px;
    height: 40px;
    margin-left: -4px;
    padding: 0 5px 0 7px;
    border: 2px solid var(--edge);
    background: #fff;
    font-size: 22px;
  }

  .search input {
    flex: 1;
    min-width: 0;
    padding: 0;
    border: 0;
    font: inherit;
  }

  .search input::placeholder {
    color: #808080;
    opacity: 1;
  }

  .props-body {
    flex: 1;
    min-height: 0;
    border: 2px solid var(--edge);
    border-top: 0;
    overflow: hidden;
  }

  .p-mark {
    width: 54px;
  }

  .p-name {
    width: 476px;
  }

  .props th,
  .props td {
    height: 42px;
    padding: 0 8px;
    border-right: 2px solid var(--line);
    border-bottom: 2px solid var(--line);
    line-height: 28px;
  }

  .props th {
    border-bottom-color: var(--edge);
  }

  .props th:nth-child(2) {
    border-right: 0;
    background: linear-gradient(var(--edge), var(--edge)) right top / 2px 34px no-repeat;
  }

  .props th:first-child,
  .props td:first-child {
    border-right: 4px solid var(--edge);
  }

  .props th:last-child,
  .props td:last-child {
    border-right: 0;
  }

  .props td:last-child {
    padding-top: 2px;
  }

  .props td:nth-child(2) {
    padding: 0 0 0 36px;
  }

  .props td:nth-child(2):has(.root) {
    padding-left: 0;
  }

  .name {
    display: flex;
    align-items: center;
    height: 40px;
    overflow: hidden;
  }

  .name .slot {
    height: 40px;
    margin-right: 8px;
    background: #fff;
  }

  .name .slot + * {
    padding-top: 2px;
  }

  .tint td {
    background: var(--bar);
  }

  .props .tall td {
    height: 122px;
    padding-top: 0;
  }

  .props td input[type="checkbox"] {
    margin-left: -4px;
  }

  .radio {
    display: flex;
    align-items: center;
    gap: 8px;
    height: 38px;
    padding-left: 6px;
  }

  .middle {
    text-align: center;
  }

  .middle svg {
    margin: 0 auto;
  }

  .status {
    display: flex;
    flex: none;
    justify-content: flex-end;
    height: 46px;
    background: var(--bar);
    font-size: 22px;
    line-height: 42px;
  }

  .status span {
    padding: 0 14px 0 12px;
  }

  .status span + span {
    border-left: 2px solid var(--line);
    padding-left: 14px;
  }

  .taskbar {
    display: flex;
    flex: none;
    align-items: center;
    justify-content: center;
    gap: 40px;
    height: 94px;
    padding-left: 32px;
    background: #d9d9d9;
  }

  .running {
    height: 78px;
    padding: 0 14px;
    border-radius: 8px;
    background: linear-gradient(#0078d4, #0078d4) center bottom / 32px 6px no-repeat #ededed;
  }
</style>
